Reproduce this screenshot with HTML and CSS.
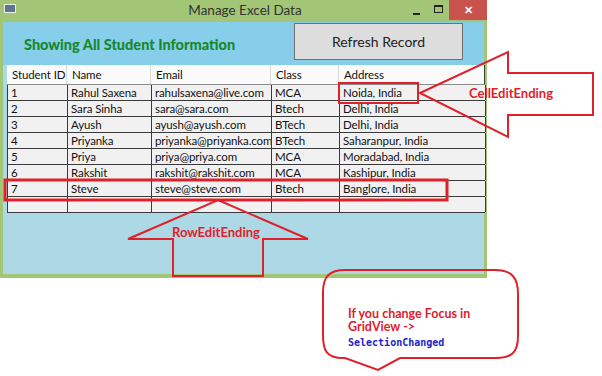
FILE: index.html
```html
<!DOCTYPE html>
<html lang="en">
<head>
  <meta charset="UTF-8">
  <title>Manage Excel Data</title>
  <link rel="stylesheet" href="styles.css">
</head>
<body>
  <div class="window">
    <div class="titlebar">
      <div class="titlebar__icon"><span></span></div>
      <div class="titlebar__title">Manage Excel Data</div>
      <div class="titlebar__buttons">
        <div class="titlebar__btn titlebar__btn--min"><span></span></div>
        <div class="titlebar__btn titlebar__btn--max"><span></span></div>
        <div class="titlebar__btn titlebar__btn--close">&#x2715;</div>
      </div>
    </div>
    <div class="client">
      <div class="band">
        <div class="band__title">Showing All Student Information</div>
        <button class="band__button">Refresh Record</button>
      </div>
      <div class="grid">
        <div class="grid__row grid__row--head">
          <div class="grid__cell">Student ID</div>
          <div class="grid__cell">Name</div>
          <div class="grid__cell">Email</div>
          <div class="grid__cell">Class</div>
          <div class="grid__cell">Address</div>
        </div>
        <div class="grid__row">
          <div class="grid__cell">1</div>
          <div class="grid__cell">Rahul Saxena</div>
          <div class="grid__cell">rahulsaxena@live.com</div>
          <div class="grid__cell">MCA</div>
          <div class="grid__cell">Noida, India</div>
        </div>
        <div class="grid__row">
          <div class="grid__cell">2</div>
          <div class="grid__cell">Sara Sinha</div>
          <div class="grid__cell">sara@sara.com</div>
          <div class="grid__cell">Btech</div>
          <div class="grid__cell">Delhi, India</div>
        </div>
        <div class="grid__row">
          <div class="grid__cell">3</div>
          <div class="grid__cell">Ayush</div>
          <div class="grid__cell">ayush@ayush.com</div>
          <div class="grid__cell">BTech</div>
          <div class="grid__cell">Delhi, India</div>
        </div>
        <div class="grid__row">
          <div class="grid__cell">4</div>
          <div class="grid__cell">Priyanka</div>
          <div class="grid__cell">priyanka@priyanka.com</div>
          <div class="grid__cell">BTech</div>
          <div class="grid__cell">Saharanpur, India</div>
        </div>
        <div class="grid__row">
          <div class="grid__cell">5</div>
          <div class="grid__cell">Priya</div>
          <div class="grid__cell">priya@priya.com</div>
          <div class="grid__cell">MCA</div>
          <div class="grid__cell">Moradabad, India</div>
        </div>
        <div class="grid__row">
          <div class="grid__cell">6</div>
          <div class="grid__cell">Rakshit</div>
          <div class="grid__cell">rakshit@rakshit.com</div>
          <div class="grid__cell">MCA</div>
          <div class="grid__cell">Kashipur, India</div>
        </div>
        <div class="grid__row">
          <div class="grid__cell">7</div>
          <div class="grid__cell">Steve</div>
          <div class="grid__cell">steve@steve.com</div>
          <div class="grid__cell">Btech</div>
          <div class="grid__cell">Banglore, India</div>
        </div>
        <div class="grid__row">
          <div class="grid__cell"></div>
          <div class="grid__cell"></div>
          <div class="grid__cell"></div>
          <div class="grid__cell"></div>
          <div class="grid__cell"></div>
        </div>
      </div>
    </div>
  </div>

  <svg class="notes" width="602" height="376" viewBox="0 0 602 376">
    <g class="notes__line">
      <!-- cell / row highlights -->
      <rect x="339" y="83" width="79" height="20" />
      <rect class="notes__thick" x="5" y="180" width="442" height="20" />
      <!-- left arrow -->
      <polygon points="420,93 508,52 508,73 593,73 593,115 508,115 508,137" />
      <!-- up arrow -->
      <polygon points="218,200 308,239 263,239 263,276 173,276 173,239 128,239" />
      <!-- speech bubble -->
      <path d="M345,358 L343,358 C326,358 323,350 323,335 L323,292 C323,276 330,270 345,270 L495,270 C512,270 518,278 518,294 L518,336 C518,352 512,358 496,358 L400,358 L378,370 Z" />
    </g>
    <text class="notes__label" x="469" y="98">CellEditEnding</text>
    <text class="notes__label" x="172" y="237">RowEditEnding</text>
    <text class="notes__label notes__label--small" x="348" y="318">If you change Focus in</text>
    <text class="notes__label notes__label--small" x="348" y="331">GridView -&gt;</text>
    <text class="notes__code" x="348" y="346">SelectionChanged</text>
  </svg>
</body>
</html>
```

FILE: styles.css
```css
body {
  margin: 0;
  background: #fff;
  font-family: Lato, "Noto Sans", sans-serif;
}

.window {
  width: 487px;
  height: 278px;
  box-sizing: border-box;
  display: flex;
  flex-direction: column;
  background: #a2c576;
  border: 3px solid #a2c576;
  border-top: 0;
  border-bottom-width: 4px;
}

.titlebar {
  height: 22px;
  display: flex;
  align-items: flex-start;
}

.titlebar__icon {
  width: 16px;
  padding: 4px 0 0 1px;
}

.titlebar__icon span {
  display: block;
  width: 10px;
  height: 7px;
  background: #5d7787;
  border: 1px solid #e8eef0;
}

.titlebar__title {
  flex: 1;
  text-align: center;
  font-size: 13.5px;
  line-height: 20px;
  color: #333;
  padding-left: 65px;
}

.titlebar__buttons {
  display: flex;
  margin-right: -3px;
}

.titlebar__btn {
  width: 22px;
  height: 20px;
  display: flex;
  align-items: center;
  justify-content: center;
}

.titlebar__btn--min span {
  width: 7px;
  height: 2px;
  background: #222;
  margin-top: 8px;
}

.titlebar__btn--max span {
  width: 7px;
  height: 5px;
  border: 1px solid #222;
  border-top-width: 2px;
  margin-bottom: 2px;
}

.titlebar__btn--close {
  width: 38px;
  background: #c9524f;
  color: #fff;
  font-size: 11px;
  font-weight: bold;
}

.client {
  flex: 1;
  background: #add8e6;
}

.band {
  height: 43px;
  box-sizing: border-box;
  background: #87ceeb;
  display: flex;
  align-items: flex-start;
  justify-content: space-between;
  padding: 1px 21px 0 21px;
}

.band__title {
  margin-top: 13px;
  font-size: 14.5px;
  font-weight: 900;
  color: #17892c;
}

.band__button {
  width: 169px;
  height: 37px;
  background: #dddddd;
  border: 1px solid #707070;
  font-family: Lato, "Noto Sans", sans-serif;
  font-size: 14px;
  color: #222;
  padding: 0;
}

.grid {
  margin-left: 4px;
  width: 478px;
  font-size: 11.5px;
  letter-spacing: -0.1px;
  color: #111;
}

.grid__row {
  display: grid;
  grid-template-columns: 60px 84px 120px 68px 146px;
  height: 16px;
  box-sizing: border-box;
  background: #f1f1f1;
  border-bottom: 1px solid #3a3a3a;
  border-left: 1px solid #3a3a3a;
}

.grid__row--head {
  height: 20px;
  background: #fafafa;
  border-left: 0;
  border-bottom-color: #8a8a8a;
}

.grid__cell {
  padding-left: 3px;
  line-height: 15px;
  white-space: nowrap;
  overflow: hidden;
  border-right: 1px solid #3a3a3a;
}

.grid__row--head .grid__cell {
  line-height: 19px;
  padding-left: 5px;
  border-right-color: #d8d8d8;
}

.grid__row--head .grid__cell:last-child {
  border-right-color: #3a3a3a;
}

.notes {
  position: absolute;
  left: 0;
  top: 0;
  pointer-events: none;
}

.notes__line {
  fill: none;
  stroke: #e0202b;
  stroke-width: 2;
}

.notes__thick {
  stroke-width: 3;
}

.notes__label {
  font-family: Lato, "Noto Sans", sans-serif;
  font-weight: bold;
  font-size: 13px;
  fill: #e0202b;
}

.notes__label--small {
  font-size: 12.5px;
}

.notes__code {
  font-family: "DejaVu Sans Mono", monospace;
  font-weight: bold;
  font-size: 10px;
  fill: #2323c8;
}
```
